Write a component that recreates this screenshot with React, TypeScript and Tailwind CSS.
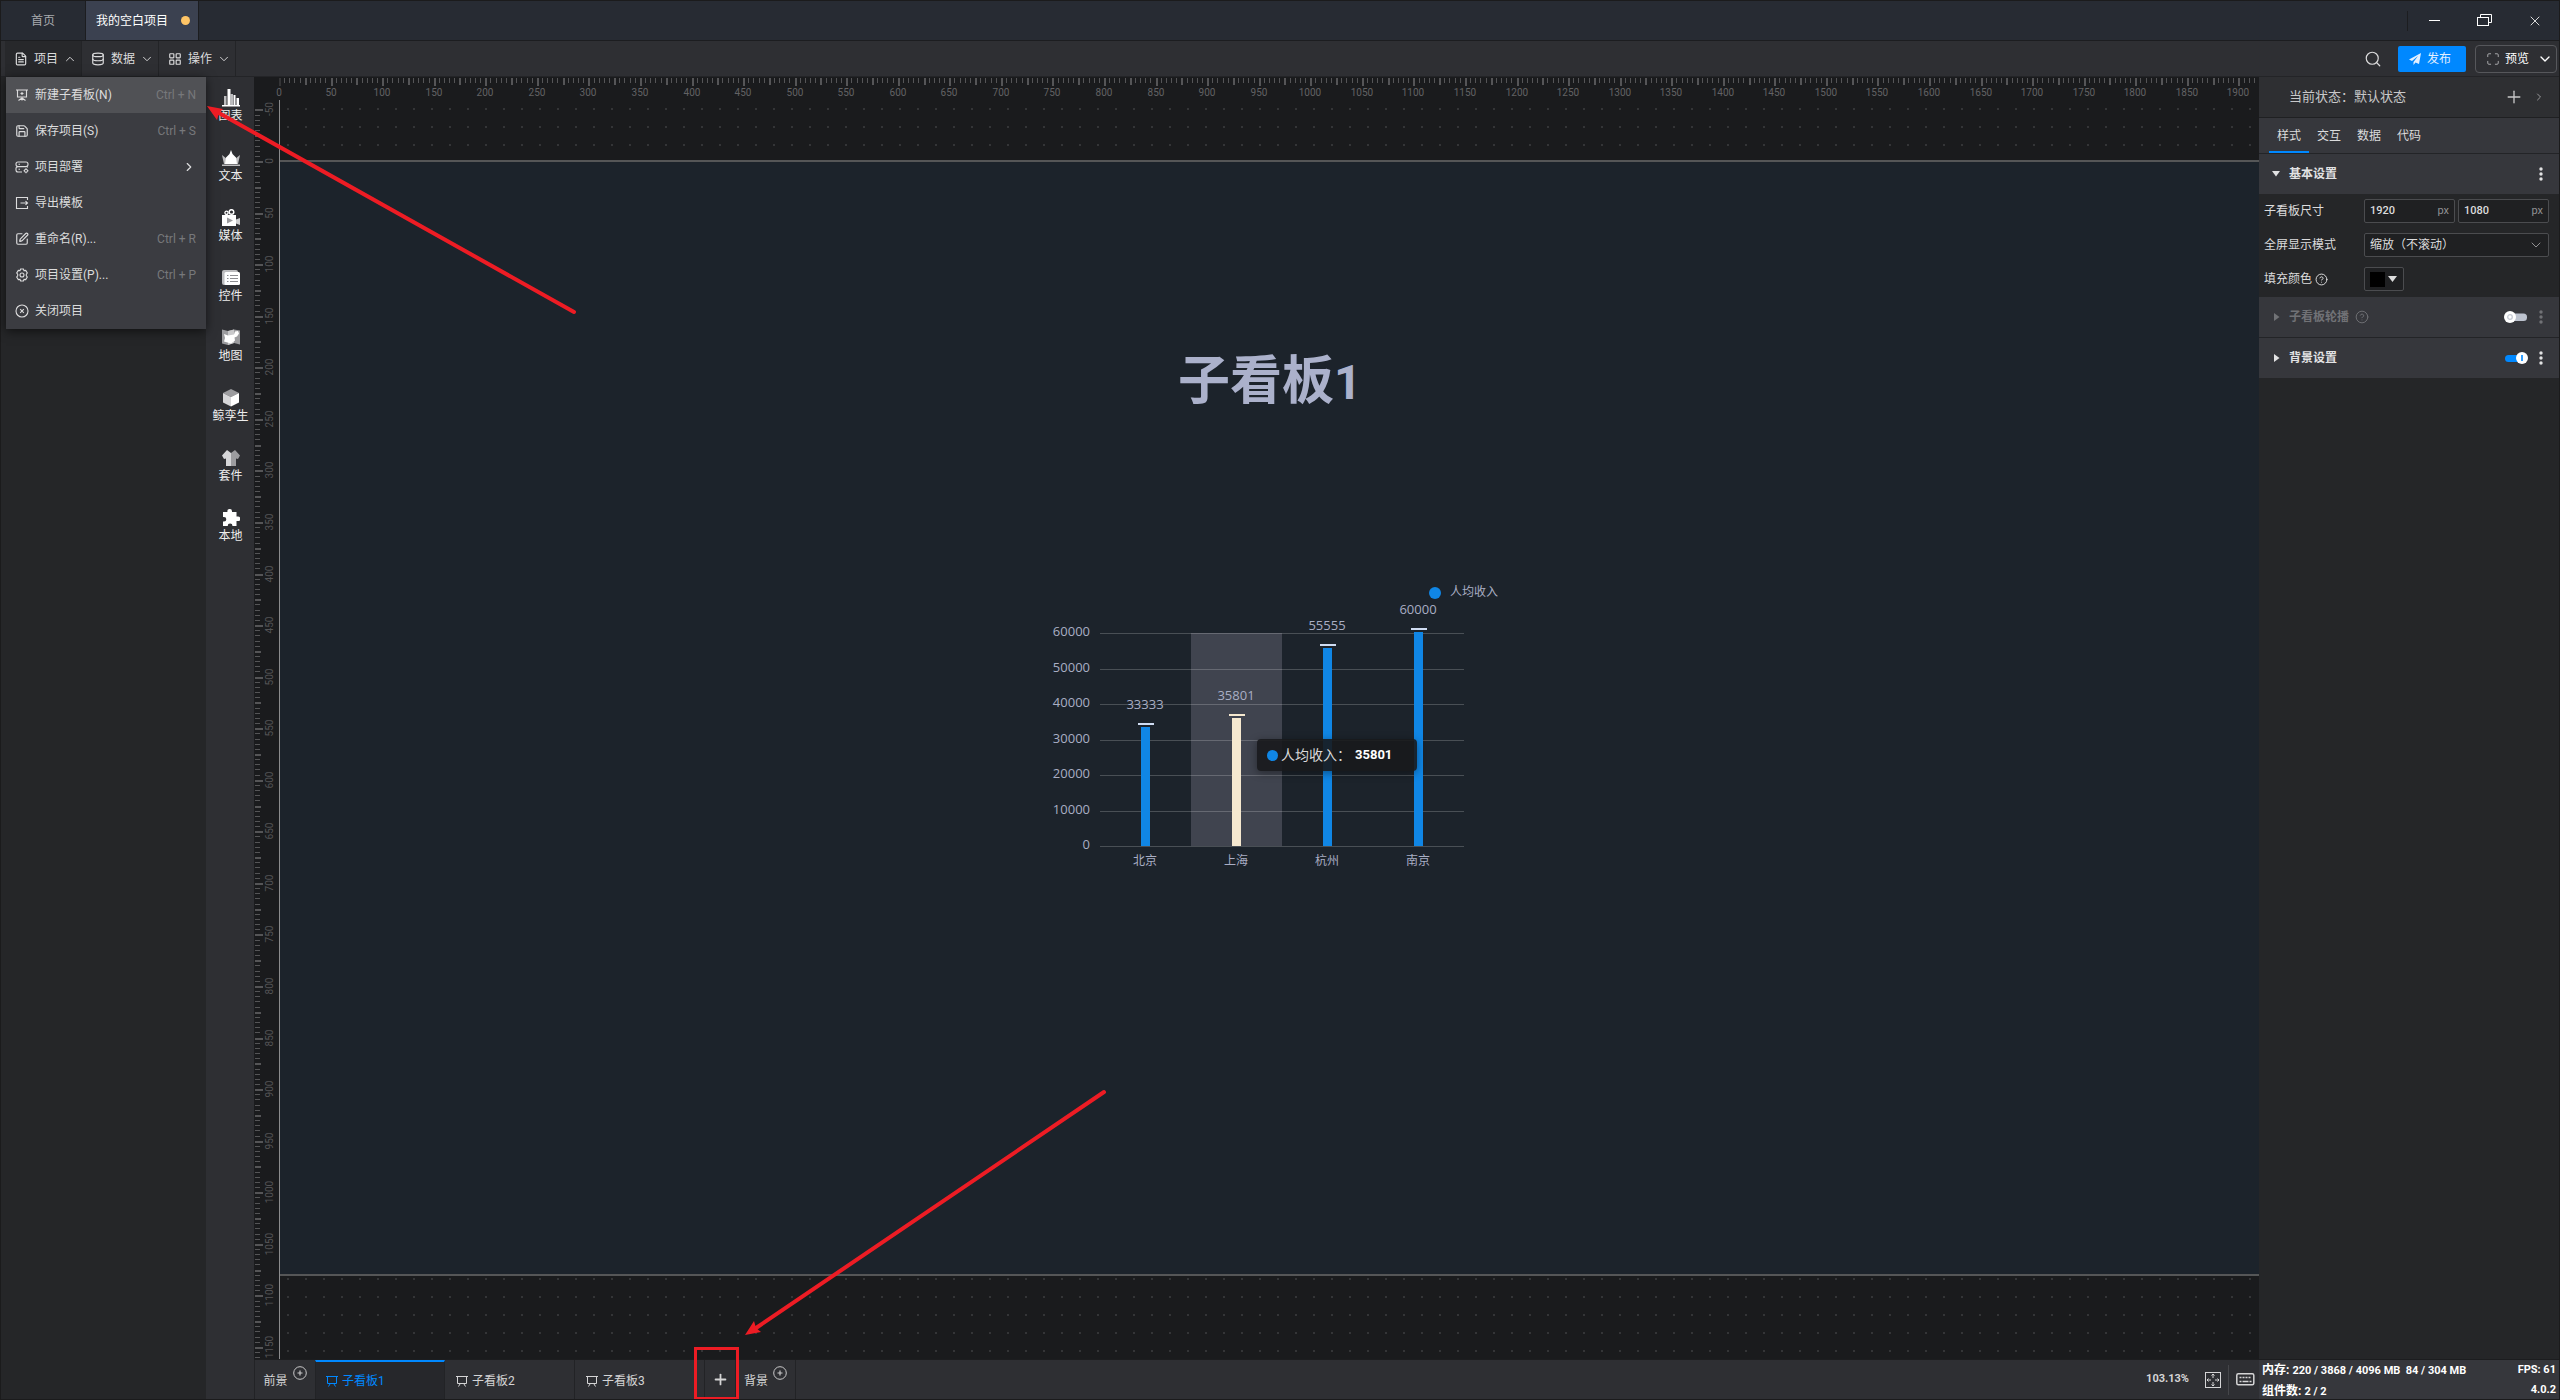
import React from 'react';
import type { ReactNode } from 'react';
import {
  ChevronDown,
  ChevronRight,
  ChevronUp,
  CircleHelp,
  Database,
  FileText,
  LayoutGrid,
  Maximize,
  Plus,
  Save,
  Search,
  SquarePen,
  X,
} from 'lucide-react';

const SCALE = 1.03125;

const NEW_BOARD = (
  <svg viewBox="0 0 14 14" className="size-[14px]" fill="none" stroke="currentColor" strokeWidth="1.1">
    <path d="M1 2h12M2.500 2v7h9V2M7 9v3.500M3.500 12.500L7 10l3.500 2.500M7 4v3M5.500 5.500h3" />
  </svg>
);

const HEXAGON_GEAR = (
  <svg viewBox="0 0 14 14" className="size-[14px]" fill="none" stroke="currentColor" strokeWidth="1.1">
    <path d="M5.600 1h2.800l.6 1.600 1.700-.2 1.600 2.600-1 1.200v1.600l1 1.200-1.600 2.600-1.700-.2-.6 1.600H5.600L5 11.400l-1.700.2L1.700 9l1-1.200V6.200L1.700 5l1.600-2.600 1.700.2z" />
    <circle cx="7" cy="7" r="2" />
  </svg>
);

const DEPLOY = (
  <svg viewBox="0 0 14 14" className="size-[14px]" fill="none" stroke="currentColor" strokeWidth="1.1">
    <rect x="1" y="2" width="12" height="4.600" rx="2" />
    <path d="M12.500 6.600v1M7 12H3a2 2 0 0 1-2-2V8.600a2 2 0 0 1 2-2" />
    <path d="M3.500 4.300h1.500M3.500 9.300h1.500" />
    <circle cx="11" cy="10.700" r="1.500" />
    <path d="M11 8.200v1M11 12.200v1M8.500 10.700h1M12.500 10.700h1" />
  </svg>
);

const EXPORT = (
  <svg viewBox="0 0 14 14" className="size-[14px]" fill="none" stroke="currentColor" strokeWidth="1.1">
    <path d="M12.500 4V1.500h-11v11h11V10" />
    <path d="M5.500 7h7M10.500 5.200L12.500 7l-2 1.800" />
  </svg>
);

const CLOSE_PROJECT = (
  <svg viewBox="0 0 14 14" className="size-[14px]" fill="none" stroke="currentColor" strokeWidth="1.1">
    <circle cx="7" cy="7" r="6" />
    <path d="M5.200 5.200l3.600 3.600M8.800 5.200L5.200 8.800" />
  </svg>
);

const MENU_ITEMS: { icon: ReactNode; label: string; shortcut?: string; submenu?: boolean }[] = [
  { icon: NEW_BOARD, label: '新建子看板(N)', shortcut: 'Ctrl + N' },
  { icon: <Save size={14} />, label: '保存项目(S)', shortcut: 'Ctrl + S' },
  { icon: DEPLOY, label: '项目部署', submenu: true },
  { icon: EXPORT, label: '导出模板' },
  { icon: <SquarePen size={14} />, label: '重命名(R)...', shortcut: 'Ctrl + R' },
  { icon: HEXAGON_GEAR, label: '项目设置(P)...', shortcut: 'Ctrl + P' },
  { icon: CLOSE_PROJECT, label: '关闭项目' },
];

const TOOLS: { label: string; icon: ReactNode }[] = [
  {
    label: '图表',
    icon: (
      <>
        <path fill="#bdbdbf" d="M2 7h2.500v9H2zM8.500 5h2.500v11H8.500z" />
        <path fill="#fff" d="M5.500 0h3v16h-3zM11.500 6h2v10h-2zM14.500 9H17v7h-2.500zM0 16h18v1.500H0z" />
      </>
    ),
  },
  {
    label: '文本',
    icon: (
      <>
        <path fill="#bdbdbf" d="M0 6l5 4 1 5H2zM18 6l-5 4-1 5h4zM0 15.500h18V17H0z" />
        <path fill="#fff" d="M9 1l1.500 4L14 8.500 15 15H3l1-6.500L7.500 5z" />
      </>
    ),
  },
  {
    label: '媒体',
    icon: (
      <>
        <circle cx="4.500" cy="3.800" r="1.600" fill="none" stroke="#fff" strokeWidth="1.300" />
        <circle cx="9.500" cy="3" r="2.300" fill="none" stroke="#fff" strokeWidth="1.500" />
        <path fill="#d0d0d2" d="M14 10.500L18 9v7l-4-1.500z" />
        <path fill="#fff" d="M0 6h14v11H0z" />
        <path fill="#9b9b9e" d="M5 8.500l6 3-6 3z" />
      </>
    ),
  },
  {
    label: '控件',
    icon: (
      <>
        <rect x="0" y="1" width="16" height="15" rx="2" fill="#bdbdbf" />
        <rect x="2.500" y="3" width="15.500" height="13" rx="1.500" fill="#fff" />
        <path stroke="#8d8d91" d="M5 6.500h1.500M8 6.500h8M5 9.500h1.500M8 9.500h8M5 12.500h1.500M8 12.500h8" />
      </>
    ),
  },
  {
    label: '地图',
    icon: (
      <>
        <path fill="#9c9c9f" d="M0 .5L6 2l6-1.500 6 1v14L12 14l-6 2-6-1.500z" />
        <path fill="#c9c9cb" d="M6 2l6-1.500V14l-6 2z" />
        <path fill="#fff" d="M2 5l4 1.500L9 6l3-.5 1-3 3-.5 1 2.500-2 3-2.500 1 .5 3-4 3-3.500-1-3.500-1L3 9z" />
      </>
    ),
  },
  {
    label: '鲸孪生',
    icon: (
      <>
        <path fill="#9c9c9f" d="M9 0l8 4-8 4-8-4z" />
        <path fill="#d6d6d8" d="M1 4l8 4v9.500l-8-4z" />
        <path fill="#fff" d="M17 4L9 8v9.500l8-4z" />
      </>
    ),
  },
  {
    label: '套件',
    icon: (
      <>
        <path fill="#d6d6d8" d="M5 1l4 3v13H4V9.500L2 10 0 6.500z" />
        <path fill="#9c9c9f" d="M13 1L9 4v13h5V9.500l2 .5 2-3.500z" />
      </>
    ),
  },
  {
    label: '本地',
    icon: (
      <path
        fill="#fff"
        d="M1 3h4.500a2.300 2.300 0 1 1 4.500-.5V3h4.500v4.500H16a2.300 2.300 0 0 1 0 4.600h-1.500V17h-4a2.400 2.400 0 0 0-4.800 0H1v-4.500h1a2.300 2.300 0 0 0 0-4.600H1z"
      />
    ),
  },
];

const CHART_DATA = [
  { city: '北京', value: 33333 },
  { city: '上海', value: 35801 },
  { city: '杭州', value: 55555 },
  { city: '南京', value: 60000 },
];

const AXIS_TICKS = [0, 10000, 20000, 30000, 40000, 50000, 60000];

// Board units are drawn every 5; labels every 50.
function rulerTicks(from: number, to: number) {
  const ticks: number[] = [];
  for (let unit = from; unit <= to; unit += 5) ticks.push(unit);
  return ticks;
}

function HorizontalRuler() {
  return (
    <svg className="h-[23px] w-full overflow-visible text-[10px]" shapeRendering="crispEdges">
      {rulerTicks(0, 1920).map((unit) => {
        const major = unit % 25 === 0;
        const labelled = unit % 50 === 0;
        return (
          <rect
            key={unit}
            x={Math.round(unit * SCALE)}
            y={1}
            width={major ? 2 : 1}
            height={labelled ? 8 : major ? 7 : 5}
            fill={unit === 0 ? '#343436' : '#555557'}
          />
        );
      })}
      {rulerTicks(0, 1920)
        .filter((unit) => unit % 50 === 0)
        .map((unit) => (
          <text key={unit} x={Math.round(unit * SCALE)} y={19} textAnchor="middle" fill="#626264">
            {unit}
          </text>
        ))}
    </svg>
  );
}

function VerticalRuler() {
  const origin = 61;
  return (
    <svg className="h-full w-[25px] overflow-hidden text-[10px]" shapeRendering="crispEdges">
      {rulerTicks(-50, 1160).map((unit) => {
        const major = unit % 25 === 0;
        const labelled = unit % 50 === 0;
        return (
          <rect
            key={unit}
            x={1}
            y={Math.round(origin + unit * SCALE)}
            width={labelled ? 8 : major ? 6 : 5}
            height={major ? 2 : 1}
            fill="#555557"
          />
        );
      })}
      {rulerTicks(-50, 1160)
        .filter((unit) => unit % 50 === 0)
        .map((unit) => {
          const y = Math.round(origin + unit * SCALE);
          return (
            <text key={unit} x={19} y={y} transform={`rotate(-90 19 ${y})`} textAnchor="middle" fill="#545456">
              {unit}
            </text>
          );
        })}
    </svg>
  );
}

function IncomeChart() {
  const base = 276;
  const toY = (value: number) => Math.round(base - (value / 60000) * 213);
  return (
    <svg width="480" height="310" className="font-['Open_Sans','Noto_Sans_CJK_SC',sans-serif] text-[13px]" fill="#a9aec4">
      <rect x="151" y="63" width="91" height="213" fill="#40444f" />
      {AXIS_TICKS.map((tick) => (
        <g key={tick}>
          <rect x="60" y={toY(tick)} width="364" height="1" fill="#ffffff" fillOpacity="0.2" />
          <text x="50" y={toY(tick) + 3} textAnchor="end">
            {tick}
          </text>
        </g>
      ))}
      {CHART_DATA.map((item, index) => {
        const x = 105 + index * 91;
        const y = toY(item.value) - 1;
        const active = index === 1;
        return (
          <g key={item.city}>
            <rect x={x - 4} y={y} width="9" height={base - y} fill={active ? '#f5e8cf' : '#1086e5'} />
            <rect x={x - 7} y={y - 4} width="16" height="2" fill={active ? '#f5e8cf' : '#cfdcf2'} />
            <text x={x} y={y - 18} textAnchor="middle">
              {item.value}
            </text>
            <text x={x} y="295" textAnchor="middle" fontSize="12">
              {item.city}
            </text>
          </g>
        );
      })}
      <circle cx="395" cy="23" r="6" fill="#1086e5" />
      <text x="410" y="26" fontSize="12">
        人均收入
      </text>
    </svg>
  );
}

function BoardIcon() {
  return (
    <svg viewBox="0 0 12 12" className="size-[12px]" fill="none" stroke="currentColor">
      <path d="M0 1.500h12M1.500 1.500v7h9v-7M4 9l-1.500 2.500M8 9l1.500 2.500" />
    </svg>
  );
}

function AddCircle() {
  return (
    <svg viewBox="0 0 14 14" className="mb-4 size-[14px]" fill="none" stroke="#c9c9ca">
      <circle cx="7" cy="7" r="6.300" />
      <path d="M7 4.500v5M4.500 7h5" strokeWidth="1.200" />
    </svg>
  );
}

function MoreDots() {
  return (
    <svg viewBox="0 0 4 14" className="h-[14px] w-1" fill="currentColor">
      <circle cx="2" cy="2" r="1.700" />
      <circle cx="2" cy="7" r="1.700" />
      <circle cx="2" cy="12" r="1.700" />
    </svg>
  );
}

function Toggle({ label, checked }: { label: string; checked: boolean }) {
  return (
    <label className="flex">
      <input type="checkbox" className="sr-only" defaultChecked={checked} aria-label={label} />
      <svg viewBox="0 0 24 12" className="h-3 w-6" fill="none">
        {checked ? (
          <>
            <rect x="1" y="3" width="18" height="7" rx="3.500" fill="#0088ff" />
            <circle cx="18" cy="6" r="6" fill="#fff" />
            <rect x="17.200" y="3" width="1.600" height="6" fill="#0088ff" />
          </>
        ) : (
          <>
            <rect x="5" y="2.500" width="18" height="7.500" rx="3.500" fill="#bdc3cf" />
            <circle cx="6" cy="6" r="6" fill="#fff" />
            <circle cx="6" cy="6" r="2.300" stroke="#c5cad4" strokeWidth="1.300" />
          </>
        )}
      </svg>
    </label>
  );
}

function TitleBar() {
  return (
    <header className="flex h-10 shrink-0 border-b border-[#1c1d20] bg-[#272b33]">
      <button className="w-[84px] text-[#a8aaae]">首页</button>
      <button className="flex w-[114px] items-center justify-between border-x border-[#1c1d20] bg-[#3b4150] pr-2 pl-[10px] text-white">
        我的空白项目
        <span className="size-[9px] rounded-full bg-[#ffc566]" />
      </button>
      <div className="ml-auto flex items-center text-[#e6e6e6]">
        <span className="mr-[21px] h-5 w-px bg-[#1c1d20]" />
        <button aria-label="最小化" className="mr-[37px] w-[11px]">
          <span className="block h-px bg-white" />
        </button>
        <button aria-label="还原" className="mr-[35px]">
          <svg width="15" height="13" fill="none" stroke="#fff">
            <path d="M3.500 3.500v-3h11v8h-3" />
            <rect x="0.500" y="3.500" width="11" height="8" />
          </svg>
        </button>
        <button aria-label="关闭" className="mr-4">
          <X size={16} strokeWidth={1.4} />
        </button>
      </div>
    </header>
  );
}

function MenuButton({ icon, label, open }: { icon: ReactNode; label: string; open?: boolean }) {
  return (
    <button
      className={`flex w-[77px] items-center border-r border-[#232427] pl-[9px] ${open ? 'bg-[#27282b]' : ''}`}
    >
      {icon}
      <span className="mr-[5px] ml-[6px]">{label}</span>
      {open ? <ChevronUp size={14} strokeWidth={1.6} /> : <ChevronDown size={14} strokeWidth={1.6} />}
    </button>
  );
}

function MenuBar() {
  return (
    <nav className="flex h-9 shrink-0 border-b border-[#232427] bg-[#2e2f33] pl-1">
      <MenuButton icon={<FileText size={14} />} label="项目" open />
      <MenuButton icon={<Database size={14} />} label="数据" />
      <MenuButton icon={<LayoutGrid size={14} />} label="操作" />
      <div className="mr-[2px] ml-auto flex items-center">
        <button aria-label="搜索" className="mr-4">
          <Search size={18} strokeWidth={1.6} />
        </button>
        <button className="mr-[9px] flex h-[26px] w-[68px] items-center gap-[6px] rounded-xs bg-[#0088ff] pl-[11px] text-[#e3efff]">
          <svg width="12" height="12" fill="currentColor">
            <path d="M12 0L0 6.500l3 1.500 6-5-4.500 6V12l2-2.500L10 11z" />
          </svg>
          发布
        </button>
        <button className="flex h-7 w-[82px] items-center rounded-sm border border-[#56575b] pl-[10px] text-white">
          <Maximize size={14} strokeWidth={1.5} className="mr-[5px] text-[#b5b5b7]" />
          预览
          <ChevronDown size={16} className="ml-2" />
        </button>
      </div>
    </nav>
  );
}

function ProjectMenu() {
  return (
    <ul className="absolute top-0 left-[5px] z-20 w-[200px] bg-[#3b3c41] shadow-[0_2px_10px_rgba(0,0,0,0.6)]">
      {MENU_ITEMS.map((item, index) => (
        <li key={item.label}>
          <button className={`flex h-9 w-full items-center pr-[10px] pl-[9px] ${index === 0 ? 'bg-[#505155]' : ''}`}>
            {item.icon}
            <span className="ml-[6px]">{item.label}</span>
            {item.shortcut && <span className="ml-auto text-[#77787b]">{item.shortcut}</span>}
            {item.submenu && <ChevronRight size={14} className="ml-auto" />}
          </button>
        </li>
      ))}
    </ul>
  );
}

function ToolStrip() {
  return (
    <aside className="w-12 shrink-0 bg-[#2e2f33]">
      {TOOLS.map((tool) => (
        <button key={tool.label} className="flex h-[60px] w-full flex-col items-center pt-3 pl-px whitespace-nowrap text-[#ededed]">
          <svg viewBox="0 0 18 18" className="size-[18px]">
            {tool.icon}
          </svg>
          <span className="leading-[18px]">{tool.label}</span>
        </button>
      ))}
    </aside>
  );
}

function Stage() {
  return (
    <section className="relative min-w-0 overflow-hidden border-l border-[#8b8b8c]">
      <svg className="absolute inset-0 size-full" shapeRendering="crispEdges">
        <defs>
          <pattern id="grid-dots" width="18" height="18" patternUnits="userSpaceOnUse">
            <rect x="7" y="8" width="2" height="2" fill="#343537" />
          </pattern>
        </defs>
        <rect width="100%" height="100%" fill="url(#grid-dots)" />
      </svg>
      <div className="absolute top-[60px] left-0 h-[1116px] w-[1980px] border-y-2 border-[#555657] bg-[#1c232b]">
        <h1 className="absolute top-[182px] left-[898px] text-[52px] leading-[76px] font-bold whitespace-nowrap text-[#abb1cb]">
          子看板<span className="text-[48px]">1</span>
        </h1>
        <div className="absolute top-[408px] left-[760px]">
          <IncomeChart />
          <div className="absolute top-[169px] left-[217px] flex h-8 w-40 items-center rounded-sm bg-[#18191c]/90 pl-[10px] text-[14px] text-[#d9d9da] shadow-[0_2px_8px_rgba(0,0,0,0.4)]">
            <span className="mr-[3px] size-[11px] rounded-full bg-[#1086e5]" />
            人均收入：
            <b className="ml-1 text-[13px] text-white">35801</b>
          </div>
        </div>
      </div>
    </section>
  );
}

function BoardTabs() {
  return (
    <footer className="flex h-10 shrink-0 border-t border-[#1c1d1f] bg-[#2e2f33] text-[#d5d5d6]">
      <button className="flex w-[61px] items-center justify-center gap-[5px] border-l border-[#222326] pt-[3px]">
        前景
        <AddCircle />
      </button>
      <button className="flex w-[130px] items-center gap-1 border-x border-t-2 border-x-[#222326] border-t-[#0088ff] bg-[#26272b] pt-px pl-[10px] text-[#0088ff]">
        <BoardIcon />
        子看板1
      </button>
      <button className="flex w-[130px] items-center gap-1 border-r border-[#222326] pt-[3px] pl-[11px]">
        <BoardIcon />
        子看板2
      </button>
      <button className="flex w-[130px] items-center gap-1 border-r border-[#222326] pt-[3px] pl-[11px]">
        <BoardIcon />
        子看板3
      </button>
      <button aria-label="新建子看板" className="flex w-[31px] items-center justify-center border-r border-[#222326]">
        <Plus size={17} strokeWidth={2.5} />
      </button>
      <button className="flex w-[60px] items-center justify-center gap-[5px] border-r border-[#222326] pt-[3px]">
        背景
        <AddCircle />
      </button>
      <div className="ml-auto flex items-center">
        <span className="mr-4 text-[11px] font-bold">103.13%</span>
        <button aria-label="适应画布" className="mr-[7px]">
          <svg width="16" height="16" fill="none" stroke="currentColor">
            <rect x="0.500" y="0.500" width="15" height="15" />
            <path d="M8 2v4M8 10v4M2 8h4M10 8h4M6.500 3.500L8 2l1.500 1.500M6.500 12.500L8 14l1.500-1.500M3.500 6.500L2 8l1.500 1.500M12.500 6.500L14 8l-1.500 1.500" />
          </svg>
        </button>
        <span className="mr-[7px] h-[30px] w-px bg-[#45464a]" />
        <button aria-label="快捷键" className="mr-[4px]">
          <svg width="19" height="13" fill="none" stroke="currentColor">
            <rect x="0.800" y="0.800" width="17" height="11" rx="1.500" strokeWidth="1.500" />
            <path d="M3.500 4.500h12" strokeDasharray="2 1" strokeWidth="1.300" />
            <path d="M3.500 8.500h2M6.500 8.500h6M13.500 8.500h2" strokeWidth="1.300" />
          </svg>
        </button>
      </div>
    </footer>
  );
}

function SectionHeader({ title, checked, help }: { title: string; checked: boolean; help?: boolean }) {
  return (
    <div className={`flex h-10 items-center bg-[#36373c] pr-4 pl-[15px] ${checked ? 'text-[#e2e2e3]' : 'text-[#717276]'}`}>
      <svg width="6" height="8" fill="currentColor">
        <path d="M0 0v8l5.500-4z" />
      </svg>
      <span className="mr-[6px] ml-[9px] font-bold">{title}</span>
      {help && <CircleHelp size={14} strokeWidth={1.6} />}
      <span className="mr-[11px] ml-auto">
        <Toggle label={title} checked={checked} />
      </span>
      <MoreDots />
    </div>
  );
}

function PropertyPanel() {
  return (
    <aside className="flex w-[300px] shrink-0 flex-col bg-[#252628]">
      <div className="flex h-[41px] items-center border-b border-[#1f2022] bg-[#2e2f32] pr-[14px] pl-[30px] text-[13px] text-[#c8c8c9]">
        当前状态：默认状态
        <button aria-label="新增状态" className="ml-auto">
          <Plus size={20} strokeWidth={1.6} />
        </button>
        <ChevronRight size={12} className="ml-[9px] text-[#98989a]" />
      </div>
      <div className="flex h-9 border-b border-[#232427] bg-[#36373c] pl-[10px]">
        {['样式', '交互', '数据', '代码'].map((tab, index) => (
          <button key={tab} className={`w-10 border-b-2 pt-[2px] ${index === 0 ? 'border-[#0088ff]' : 'border-transparent'}`}>
            {tab}
          </button>
        ))}
      </div>
      <div className="flex h-10 items-center bg-[#36373c] pr-4 pl-[13px] text-[#e2e2e3]">
        <svg width="8" height="6" fill="currentColor">
          <path d="M0 0h8L4 5.500z" />
        </svg>
        <span className="mr-auto ml-[9px] font-bold">基本设置</span>
        <MoreDots />
      </div>
      <div className="grid grid-cols-[100px_1fr] gap-y-[10px] pt-[5px] pr-[10px] pb-[6px] pl-[5px]">
        <label htmlFor="board-width" className="leading-6">
          子看板尺寸
        </label>
        <div className="flex gap-[3px]">
          {['1920', '1080'].map((size, index) => (
            <div key={size} className="flex h-6 min-w-0 flex-1 items-center rounded-xs border border-[#4b4c4f] bg-[#1f2022] px-[5px]">
              <input
                id={index === 0 ? 'board-width' : 'board-height'}
                aria-label={index === 0 ? '宽' : '高'}
                defaultValue={size}
                className="w-full min-w-0 text-[11px] font-medium outline-none"
              />
              <span className="text-[11px] text-[#919193]">px</span>
            </div>
          ))}
        </div>
        <label htmlFor="display-mode" className="leading-6">
          全屏显示模式
        </label>
        <div className="relative">
          <select id="display-mode" className="h-6 w-full appearance-none rounded-xs border border-[#4b4c4f] bg-[#1f2022] px-[5px]">
            <option>缩放（不滚动）</option>
          </select>
          <ChevronDown size={16} strokeWidth={1.5} className="pointer-events-none absolute top-1 right-[5px] text-[#919193]" />
        </div>
        <span className="flex items-center gap-[3px]">
          填充颜色
          <CircleHelp size={13} strokeWidth={1.8} />
        </span>
        <button aria-label="填充颜色" className="flex h-6 w-10 items-center gap-[3px] rounded-xs border border-[#4b4c4f] bg-[#1f2022] pl-[5px]">
          <span className="size-[15px] bg-black" />
          <svg width="9" height="7" fill="currentColor">
            <path d="M0 0h9L4.500 6z" />
          </svg>
        </button>
      </div>
      <SectionHeader title="子看板轮播" checked={false} help />
      <div className="h-px bg-[#232427]" />
      <SectionHeader title="背景设置" checked />
      <footer className="mt-auto flex h-10 justify-between border-t border-[#1c1d1f] bg-[#36373c] px-[3px] text-[11px] leading-5 font-bold whitespace-pre text-white">
        <div>
          <p>
            <span className="text-[12px]">内存: </span>220 / 3868 / 4096 MB  84 / 304 MB
          </p>
          <p>
            <span className="text-[12px]">组件数: </span>2 / 2
          </p>
        </div>
        <div className="text-right">
          <p>FPS: 61</p>
          <p>4.0.2</p>
        </div>
      </footer>
    </aside>
  );
}

// Red call-outs over the editor: two arrows and the frame round the add button.
function Annotations() {
  return (
    <svg className="pointer-events-none absolute top-0 left-0 z-30 size-full" fill="#ed1c24">
      <path d="M218 112L573 311" stroke="#ed1c24" strokeWidth="4" strokeLinecap="round" />
      <path d="M206 105L222 108L218 112L216 119z" />
      <path d="M755 1327L1103 1091" stroke="#ed1c24" strokeWidth="4" strokeLinecap="round" />
      <path d="M744 1334L753 1320L755 1327L760 1331z" />
      <rect x="694.500" y="1347.500" width="42" height="50" fill="none" stroke="#ed1c24" strokeWidth="3" />
    </svg>
  );
}

export default function App() {
  return (
    <div className="relative flex h-screen min-h-[700px] flex-col border border-[#1b1b1c] bg-[#1a1b1d] font-[Roboto,'Noto_Sans_CJK_SC',sans-serif] text-[12px] text-[#dcdcdd]">
      <TitleBar />
      <MenuBar />
      <main className="relative flex min-h-0 flex-1">
        <div className="w-[205px] shrink-0 bg-[#252628]" />
        <ProjectMenu />
        <ToolStrip />
        <div className="flex min-w-0 flex-1 flex-col">
          <div className="grid min-h-0 flex-1 grid-cols-[25px_1fr] grid-rows-[23px_1fr] overflow-hidden">
            <span />
            <HorizontalRuler />
            <VerticalRuler />
            <Stage />
          </div>
          <BoardTabs />
        </div>
        <PropertyPanel />
      </main>
      <Annotations />
    </div>
  );
}
